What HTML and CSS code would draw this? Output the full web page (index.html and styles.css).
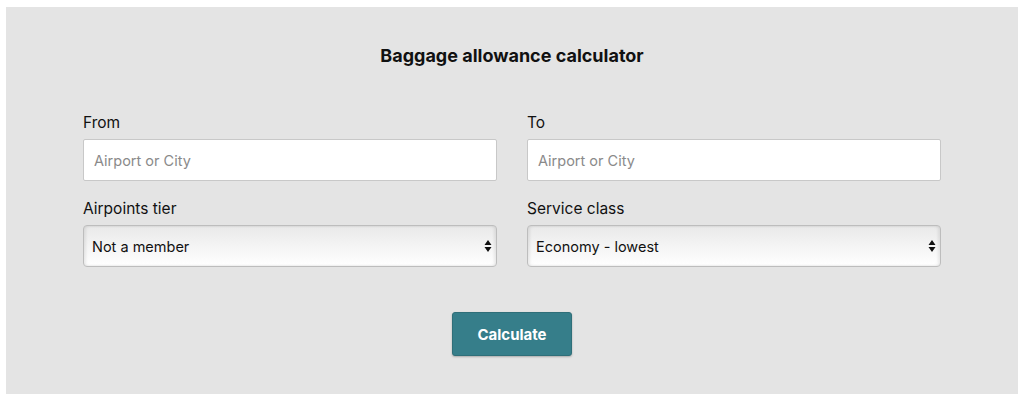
FILE: index.html
```html
<!DOCTYPE html>
<html>
<head>
<meta charset="utf-8">
<link rel="stylesheet" href="styles.css">
</head>
<body>
<div class="panel">
  <h1 class="title">Baggage allowance calculator</h1>
  <div class="grid">
    <div class="field">
      <label class="label">From</label>
      <div class="input"><span class="placeholder">Airport or City</span></div>
    </div>
    <div class="field">
      <label class="label">To</label>
      <div class="input"><span class="placeholder">Airport or City</span></div>
    </div>
    <div class="field">
      <label class="label">Airpoints tier</label>
      <div class="select"><span class="value">Not a member</span>
        <svg class="arrows" width="8" height="14" viewBox="0 0 8 14"><path d="M4 1 L7.5 6 L0.5 6 Z M0.5 8 L7.5 8 L4 13 Z" fill="#111"/></svg>
      </div>
    </div>
    <div class="field">
      <label class="label">Service class</label>
      <div class="select"><span class="value">Economy - lowest</span>
        <svg class="arrows" width="8" height="14" viewBox="0 0 8 14"><path d="M4 1 L7.5 6 L0.5 6 Z M0.5 8 L7.5 8 L4 13 Z" fill="#111"/></svg>
      </div>
    </div>
  </div>
  <div class="actions">
    <button class="btn">Calculate</button>
  </div>
</div>
</body>
</html>
```
FILE: styles.css
```css
* { box-sizing: border-box; }
html, body { margin: 0; padding: 0; background: #fff; }
body { padding: 7px 6px 7px 6px; font-family: Inter, "Liberation Sans", sans-serif; color: #111; }
.panel {
  background: #e4e4e4;
  height: 387px;
  padding: 38px 77px 0 77px;
}
.title {
  margin: 0;
  text-align: center;
  font-size: 18px;
  font-weight: 700;
  line-height: 22px;
  letter-spacing: 0;
}
.grid {
  margin-top: 47px;
  display: grid;
  grid-template-columns: 1fr 1fr;
  column-gap: 30px;
  row-gap: 19px;
}
.field { display: flex; flex-direction: column; }
.label { font-size: 15.5px; line-height: 18px; margin-bottom: 7px; color: #111; }
.input {
  height: 42px;
  background: #fff;
  border: 1px solid #c8c8c8;
  border-radius: 2px;
  display: flex;
  align-items: center;
  padding-left: 10px;
}
.placeholder { font-size: 14.5px; color: #8a8a8a; }
.select {
  height: 42px;
  border: 1px solid #bdbdbd;
  border-radius: 4px;
  background: linear-gradient(#e9e9e9, #ffffff);
  box-shadow: inset 2px 0 3px rgba(0,0,0,0.08), inset -2px 0 3px rgba(0,0,0,0.08);
  display: flex;
  align-items: center;
  justify-content: space-between;
  padding: 0 4px 0 8px;
}
.value { font-size: 14.5px; color: #111; }
.actions { display: flex; justify-content: center; margin-top: 45px; }
.btn {
  width: 120px;
  height: 44px;
  background: #367e8a;
  color: #fff;
  border: 1px solid #2f6f79;
  border-radius: 3px;
  font-family: inherit;
  font-size: 15px;
  font-weight: 700;
  box-shadow: 0 1px 2px rgba(0,0,0,0.25);
}
```
